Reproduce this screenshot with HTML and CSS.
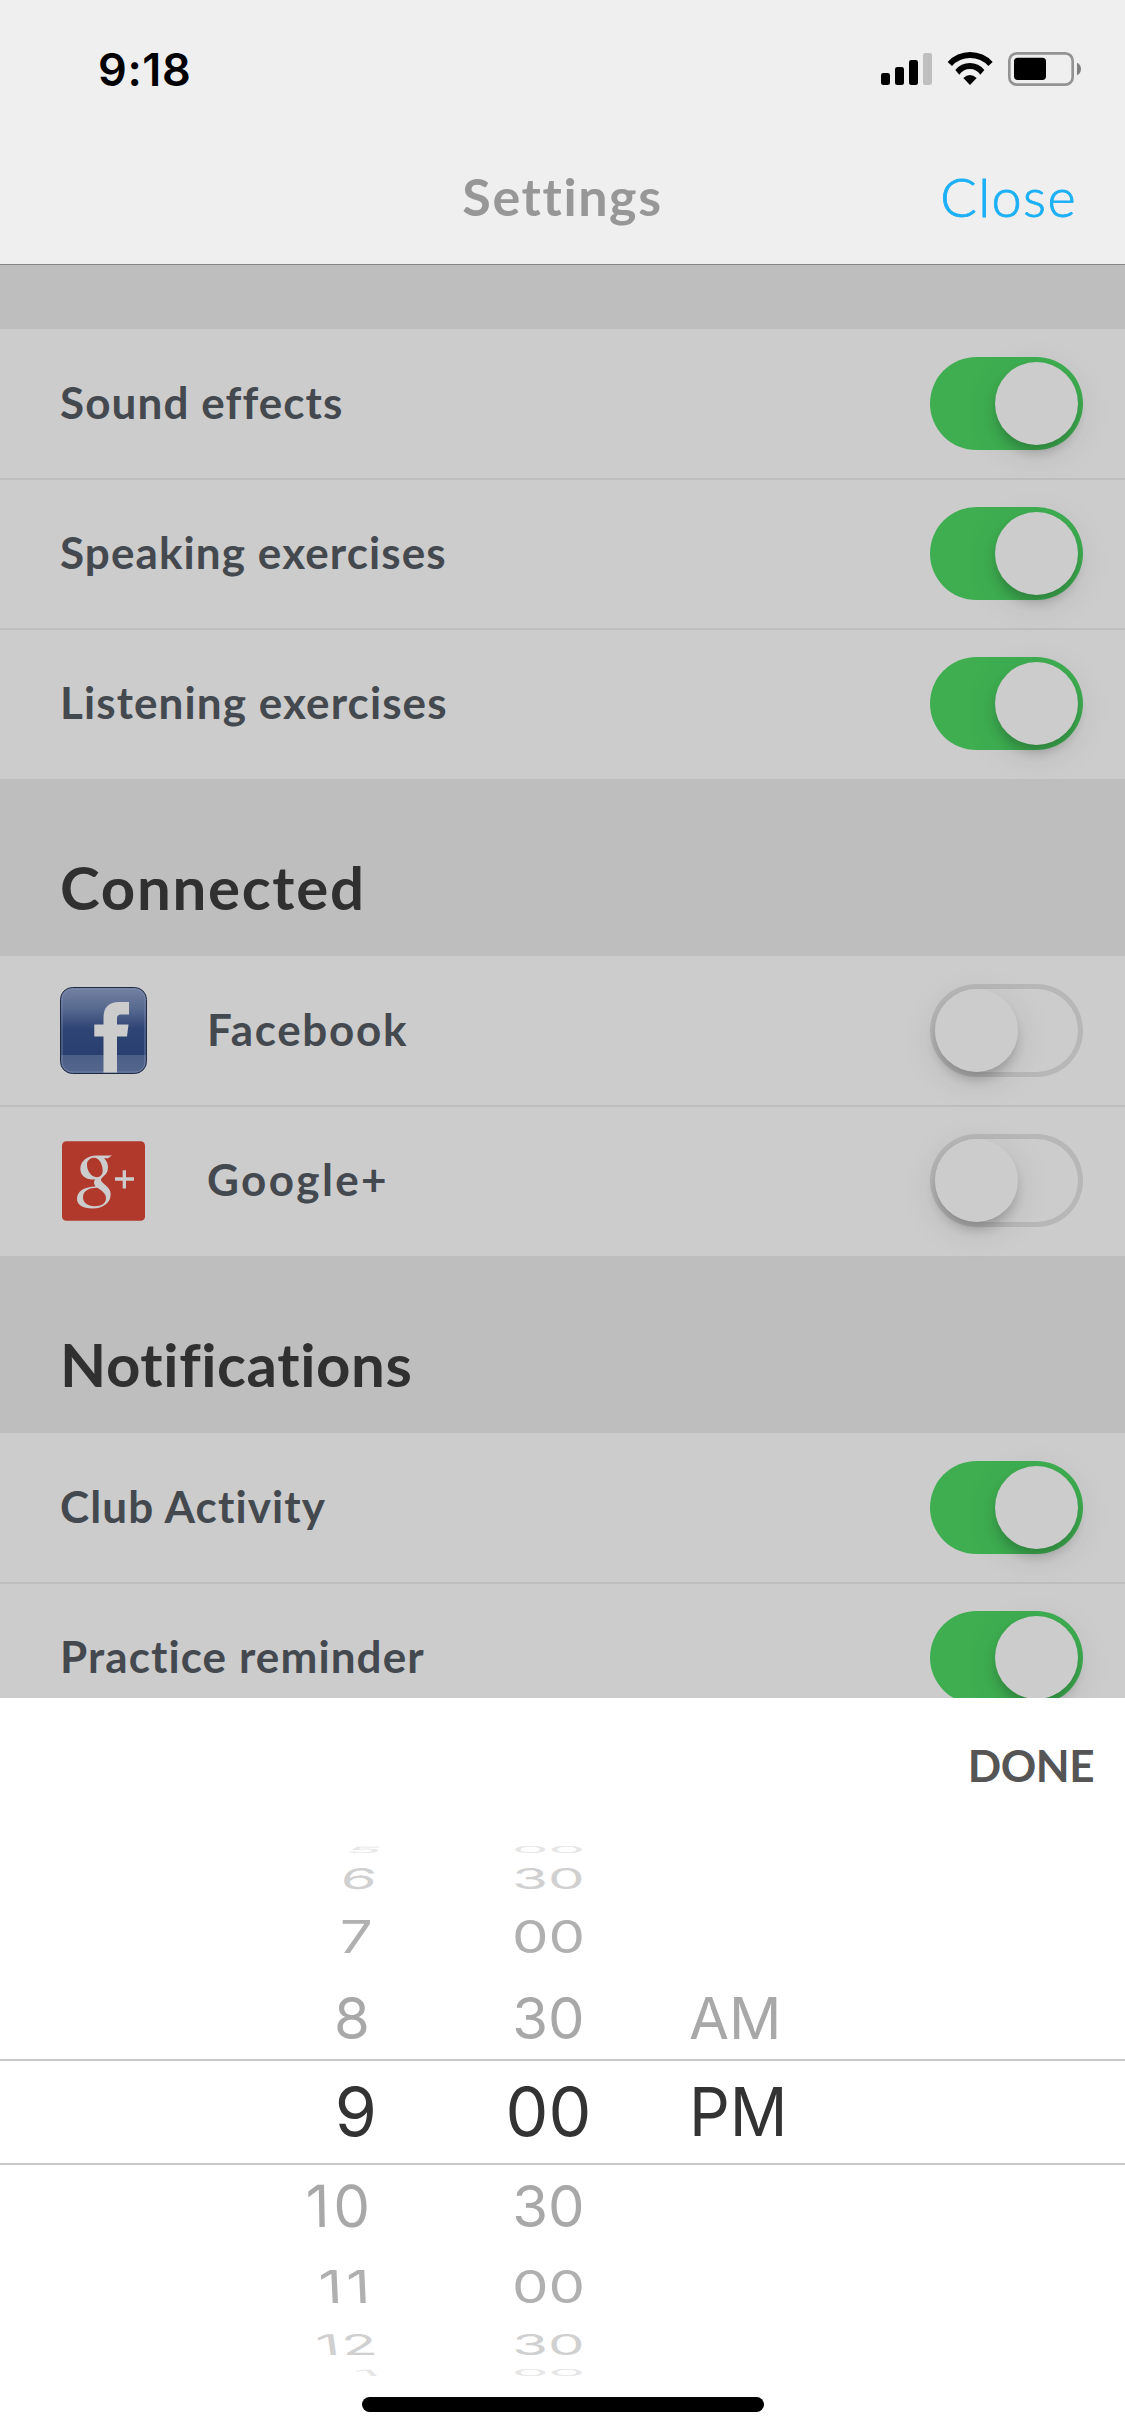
FILE: index.html
```html
<!DOCTYPE html>
<html lang="en">
<head>
    <meta charset="UTF-8">
    <meta name="viewport" content="width=device-width, initial-scale=1.0">
    <title>Settings</title>
    <link rel="stylesheet" href="styles.css">
</head>
<body>
    <header class="header">
        <div class="status-bar">
            <span class="time">9:18</span>
            <svg class="status-icons" viewBox="243 96 600 102">
                <rect x="243" y="159" width="27" height="36" rx="7"/>
                <rect x="285" y="141" width="27" height="54" rx="7"/>
                <rect x="327" y="120" width="27" height="75" rx="7"/>
                <rect x="369" y="99" width="27" height="96" rx="7" fill="#bfbfbf"/>
                <path d="M443 126A91 91 0 0 1 578 126L565 138A74 74 0 0 0 456 138Z"/>
                <path d="M466 150A55.5 55.5 0 0 1 553 150L541 164A38 38 0 0 0 478 164Z"/>
                <path d="M490 174Q510 156 530 174L510 195Z"/>
                <rect x="628" y="100" width="190" height="94" rx="22" fill="none" stroke="#939393" stroke-width="8"/>
                <rect x="642" y="113" width="96" height="67" rx="11"/>
                <path d="M831 128C847 134 847 160 831 166Z" fill="#808080"/>
            </svg>
        </div>
        <nav class="nav">
            <span></span>
            <h1 class="nav-title">Settings</h1>
            <a class="nav-close">Close</a>
        </nav>
    </header>

    <main class="settings">
        <div class="group">
            <div class="row"><span class="label">Sound effects</span><span class="toggle on"></span></div>
            <div class="row"><span class="label">Speaking exercises</span><span class="toggle on"></span></div>
            <div class="row"><span class="label">Listening exercises</span><span class="toggle on"></span></div>
        </div>

        <h2 class="section-title">Connected</h2>
        <div class="group">
            <div class="row">
                <svg class="icon" viewBox="0 0 87 87">
                    <defs>
                        <linearGradient id="fb" x1="0" y1="0" x2="0" y2="1">
                            <stop offset="0" stop-color="#7482a3"/>
                            <stop offset="0.25" stop-color="#57698f"/>
                            <stop offset="0.48" stop-color="#2e4474"/>
                            <stop offset="0.78" stop-color="#293f70"/>
                            <stop offset="0.79" stop-color="#4c5f87"/>
                            <stop offset="1" stop-color="#55678d"/>
                        </linearGradient>
                    </defs>
                    <rect x="0.5" y="0.5" width="86" height="86" rx="12" fill="url(#fb)" stroke="#1e2945"/>
                    <rect x="2" y="2" width="83" height="83" rx="10" fill="none" stroke="#7f8cab" stroke-opacity="0.7"/>
                    <path d="M43.5 85.5V49.5H34.3V37.5H43.5V31C43.5 20 49 15 59 15H69V27.5H61Q57 27.5 57 31V37.5H68.5L67 49.5H57V85.5Z" fill="#ccc"/>
                </svg>
                <span class="label facebook">Facebook</span>
                <span class="toggle"></span>
            </div>
            <div class="row">
                <svg class="icon google" viewBox="0 0 249 239">
                    <rect width="249" height="239" rx="13" fill="#b1392c"/>
                    <path fill="#ccc" fill-rule="evenodd" d="M150 43H104C76 43 55 60 55 83C55 103 70 115 92 115L99 114C97 118 96 121 96 124C96 129 98 132 101 136C62 137 45 153 45 173C45 192 63 202 90 202C126 202 146 183 146 160C146 145 138 138 127 129C120 123 117 120 117 116C117 112 121 109 126 104C134 97 138 90 138 78C138 66 133 57 126 51H138ZM97 50C112 50 122 71 122 88C122 100 116 108 104 108C87 108 75 88 75 71C75 58 84 50 97 50ZM106 140C121 150 132 157 132 171C132 186 118 195 98 195C77 195 63 184 63 168C63 150 80 140 106 140Z"/>
                    <path d="M159 113.500H216M187 87V142" stroke="#ccc" stroke-width="10" fill="none"/>
                </svg>
                <span class="label google-plus">Google+</span>
                <span class="toggle"></span>
            </div>
        </div>

        <h2 class="section-title notifications">Notifications</h2>
        <div class="group">
            <div class="row"><span class="label">Club Activity</span><span class="toggle on"></span></div>
            <div class="row"><span class="label">Practice reminder</span><span class="toggle on"></span></div>
        </div>
    </main>

    <section class="sheet">
        <div class="sheet-bar"><button class="done">DONE</button></div>
        <div class="picker">
            <div class="slot far4 up"><span class="hour">5</span><span class="minute">00</span></div>
            <div class="slot far3 up"><span class="hour">6</span><span class="minute">30</span></div>
            <div class="slot far2 up"><span class="hour">7</span><span class="minute">00</span></div>
            <div class="slot far1 up"><span class="hour">8</span><span class="minute">30</span><span class="period">AM</span></div>
            <div class="slot selected"><span class="hour">9</span><span class="minute">00</span><span class="period">PM</span></div>
            <div class="slot far1 down"><span class="hour">10</span><span class="minute">30</span></div>
            <div class="slot far2 down"><span class="hour">11</span><span class="minute">00</span></div>
            <div class="slot far3 down"><span class="hour">12</span><span class="minute">30</span></div>
            <div class="slot far4 down"><span class="hour">1</span><span class="minute">00</span></div>
        </div>
        <div class="home-indicator"></div>
    </section>
</body>
</html>
```

FILE: styles.css
```css
* {
    box-sizing: border-box;
}
body {
    margin: 0;
    width: 1125px;
    height: 2436px;
    display: flex;
    flex-direction: column;
    overflow: hidden;
    background-color: #bebebe;
    font-family: Lato, "Open Sans", sans-serif;
}
h1, h2 {
    margin: 0;
}

/* header */
.header {
    height: 265px;
    flex: none;
    background-color: #efefef;
    border-bottom: 1px solid #868686;
}
.status-bar {
    height: 132px;
    padding: 0 44px 0 98px;
    display: flex;
    justify-content: space-between;
    align-items: center;
}
.time {
    font-family: Inter, sans-serif;
    font-size: 45px;
    font-weight: 600;
    letter-spacing: 0.6px;
    margin-bottom: -6px;
}
.status-icons {
    width: 200px;
    height: 34px;
    margin-bottom: -6px;
}
.nav {
    height: 132px;
    padding: 0 48px 4px;
    display: grid;
    grid-template-columns: 1fr auto 1fr;
    align-items: center;
}
.nav-title {
    color: #979797;
    font-size: 52px;
    font-weight: 700;
    letter-spacing: 1.6px;
}
.nav-close {
    justify-self: end;
    color: #1cb0f6;
    font-size: 54px;
    font-weight: 300;
    letter-spacing: 1.4px;
    -webkit-text-stroke: 0.9px #1cb0f6;
}

/* settings list */
.settings {
    height: 1433px;
    flex: none;
    padding-top: 64px;
    overflow: hidden;
}
.row {
    height: 150px;
    padding: 0 42px 0 60px;
    display: flex;
    align-items: center;
    background-color: #ccc;
}
.row + .row {
    box-shadow: 0 -1px 0 #bebebe, inset 0 1px 0 #bebebe;
}
.label {
    flex: 1;
    padding-bottom: 4px;
    color: #44494f;
    font-size: 44px;
    font-weight: 700;
    letter-spacing: 1.1px;
}
.label.facebook {
    letter-spacing: 1.7px;
}
.label.google-plus {
    letter-spacing: 2.4px;
}
.section-title {
    height: 177px;
    padding: 72px 60px 0;
    color: #303030;
    font-size: 60px;
    line-height: 72px;
    font-weight: 700;
    letter-spacing: 1.7px;
}
.notifications {
    letter-spacing: 0.6px;
}
.icon {
    width: 87px;
    height: 87px;
    margin: -2px 60px 0 0;
}
.icon.google {
    width: 83px;
    height: 80px;
    margin: -1px 62px 0 2px;
}

/* switches */
.toggle {
    width: 153px;
    height: 93px;
    margin-top: -1px;
    padding: 5px;
    border-radius: 47px;
    box-shadow: inset 0 0 0 5px #b7b7b7;
    display: flex;
}
.toggle::before {
    content: "";
    width: 83px;
    height: 83px;
    border-radius: 50%;
    background-color: #ccc;
    box-shadow: 0 9px 12px -2px rgba(0, 0, 0, 0.2), 0 8px 36px rgba(0, 0, 0, 0.1);
}
.toggle.on {
    justify-content: flex-end;
    background-color: #3eae51;
    box-shadow: none;
}

/* time picker */
.sheet {
    flex: 1;
    display: flex;
    flex-direction: column;
    align-items: center;
    background-color: #fff;
    font-family: Inter, sans-serif;
}
.sheet-bar {
    width: 100%;
    height: 141px;
    padding: 45px 31px 0;
    text-align: right;
}
.done {
    padding: 0;
    border: 0;
    background: none;
    color: #555;
    font-family: Lato, sans-serif;
    font-size: 44px;
    line-height: 44px;
    font-weight: 700;
    letter-spacing: -0.5px;
}
.picker {
    width: 100%;
    color: #a8a8a8;
    font-size: 58px;
    line-height: 1;
}
.slot {
    display: grid;
    grid-template-columns: 371px 318px 1fr;
    grid-template-rows: 100%;
    align-items: center;
}
.slot span {
    white-space: nowrap;
}
.hour {
    text-align: right;
}
.minute {
    padding-left: 37px;
    text-align: center;
}
.period {
    transform-origin: left;
}
.selected {
    height: 106px;
    padding-bottom: 3px;
    border-top: 2px solid #c9c9c9;
    border-bottom: 2px solid #c9c9c9;
    color: #333;
    font-size: 68px;
}
.far1 { height: 82px; }
.far2 { height: 81px; color: #b0b0b0; }
.far3 { height: 35px; color: #d0d0d0; }
.far4 { height: 22px; color: #e6e6e6; }
.far1.down { height: 81px; }
.far2.down { height: 82px; }
.far3.down { height: 33px; }
.far4.down { height: 24px; }
.selected .hour { transform: translateX(6px); }
.selected .period { transform: scaleX(0.94); }
.far1 .hour { transform: translateX(-1px); }
.far2 span { transform: scaleY(0.78); }
.far3 span { transform: scaleY(0.49); }
.far4 span { transform: scaleY(0.15); }

/* the hour drum is seen from the side, so its digits lean */
.far2.up .hour { transform: translateX(1px) scaleY(0.78) skewX(-2deg); }
.far3.up .hour { transform: translateX(6px) scaleY(0.49) skewX(-4deg); }
.far4.up .hour { transform: translateX(11px) scaleY(0.15) skewX(-8deg); }
.far1.down .hour { letter-spacing: 4px; transform: translateX(3px) skewX(1deg); }
.far2.down .hour { letter-spacing: 4px; transform: translateX(3px) scaleY(0.78) skewX(2deg); }
.far3.down .hour { letter-spacing: 2px; transform: translateX(8px) scaleY(0.49) skewX(4deg); }
.far4.down .hour { transform: translateX(8px) scaleY(0.15) skewX(8deg); }
.home-indicator {
    width: 402px;
    height: 15px;
    margin-top: 12px;
    border-radius: 8px;
    background-color: #000;
}
```
